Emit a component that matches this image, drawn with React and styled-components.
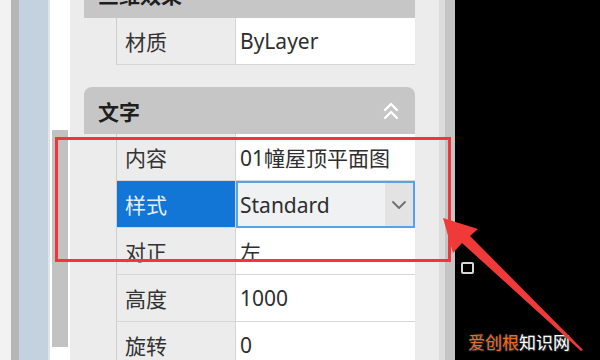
import styled, { createGlobalStyle } from 'styled-components';

const GlobalStyle = createGlobalStyle`
  html, body { margin: 0; padding: 0; background: #000; }
  body { font-family: "Noto Sans", "Noto Sans CJK SC", sans-serif; }
`;

const FONT = `"Noto Sans", "Noto Sans CJK SC", sans-serif`;

const Page = styled.div`
  position: relative;
  display: flex;
  width: 600px;
  height: 360px;
  overflow: hidden;
  background: #000;
`;

const Strip = styled.div`
  flex-shrink: 0;
  width: ${p => p.$w}px;
  background: ${p => p.$bg};
`;

const ScrollTrack = styled.div`
  flex-shrink: 0;
  width: 18px;
  background: #fff;
  border-left: 2px solid #dde5ee;
  padding: 130px 0 0 2px;
`;

const ScrollThumb = styled.div`
  width: 16px;
  height: 217px;
  background: #c2c2c2;
`;

const Panel = styled.div`
  flex-shrink: 0;
  width: 355px;
  padding-left: 14px;
  background: #ececec;
  border-right: 6px solid #dcdcdc;
  display: flex;
  flex-direction: column;
`;

const PanelEdge = styled.div`
  flex-shrink: 0;
  width: 10px;
  background: #c4c4c4;
`;

const SectionHeader = styled.div`
  flex-shrink: 0;
  width: 331px;
  height: ${p => p.$h || 47}px;
  margin-top: ${p => p.$offset || 0}px;
  box-sizing: border-box;
  padding: 0 16px 0 14px;
  background: #c6c6c6;
  border-radius: 8px 8px 0 0;
  display: flex;
  align-items: center;
  justify-content: space-between;
  font-family: ${FONT};
  font-size: 21px;
  font-weight: 700;
  color: #1e1e1e;
`;

const Gap = styled.div`
  flex-shrink: 0;
  height: ${p => p.$h}px;
`;

const Row = styled.div`
  flex-shrink: 0;
  margin-left: 32px;
  width: 299px;
  height: 47px;
  box-sizing: border-box;
  display: grid;
  grid-template-columns: 120px 179px;
  border-bottom: 1px solid #d6d6d6;
  font-family: ${FONT};
  font-size: 21px;
`;

const Label = styled.div`
  display: flex;
  align-items: center;
  padding-left: 8px;
  border-left: 1px solid #cdcdcd;
  border-right: 1px solid #d4d4d4;
  background: ${p => (p.$selected ? '#1176d6' : '#ececec')};
  color: ${p => (p.$selected ? '#e6efff' : '#333')};
`;

const Value = styled.div`
  display: flex;
  align-items: center;
  padding-left: 4px;
  background: #fff;
  color: #2e2e2e;
  white-space: nowrap;
  overflow: hidden;
`;

const Combo = styled.div`
  display: flex;
  align-items: stretch;
  box-sizing: border-box;
  border: 2px solid #5aa2e4;
  background: #eff1f3;
  color: #2e2e2e;
  margin-bottom: -1px;
`;

const ComboText = styled.div`
  flex: 1;
  display: flex;
  align-items: center;
  padding-left: 2px;
`;

const ComboButton = styled.div`
  width: 28px;
  display: flex;
  align-items: center;
  justify-content: center;
  background: #e3e3e3;
`;

const Canvas = styled.div`
  position: relative;
  flex: 1;
  background: #000;
`;

const Grip = styled.div`
  position: absolute;
  left: 6px;
  top: 262px;
  width: 13px;
  height: 12px;
  box-sizing: border-box;
  border: 2px solid #d6d6d6;
  border-radius: 2px;
`;

const Watermark = styled.div`
  position: absolute;
  left: 13px;
  top: 329px;
  font-family: "Noto Sans CJK SC", sans-serif;
  font-size: 17px;
  color: #fff;
  text-shadow: 0 0 2px #444, 1px 1px 1px #333;
  white-space: nowrap;
`;

const Accent = styled.span`
  color: #ef6a22;
`;

const Highlight = styled.div`
  position: absolute;
  left: 55px;
  top: 137px;
  width: 396px;
  height: 125px;
  box-sizing: border-box;
  border: 3px solid #f0363a;
  pointer-events: none;
`;

const ArrowSvg = styled.svg`
  position: absolute;
  left: 440px;
  top: 210px;
  width: 160px;
  height: 150px;
`;

function DoubleChevronUp() {
  return (
    <svg width="16" height="18" viewBox="0 0 16 18" fill="none" stroke="#fff" strokeWidth="2.4" strokeLinecap="round" strokeLinejoin="round">
      <path d="M2 8 L8 2 L14 8" />
      <path d="M2 16 L8 10 L14 16" />
    </svg>
  );
}

function ChevronDown() {
  return (
    <svg width="16" height="10" viewBox="0 0 16 10" fill="none" stroke="#6e6e6e" strokeWidth="1.8" strokeLinecap="round" strokeLinejoin="round">
      <path d="M2 2 L8 8 L14 2" />
    </svg>
  );
}

const textRows = [
  { label: '内容', value: '01幢屋顶平面图' },
  { label: '样式', value: 'Standard', combo: true },
  { label: '对正', value: '左' },
  { label: '高度', value: '1000' },
  { label: '旋转', value: '0' },
];

export default function App() {
  return (
    <>
      <GlobalStyle />
      <Page>
        <Strip $w={11} $bg="#f2f2f2" />
        <Strip $w={8} $bg="#b6b6b6" />
        <Strip $w={29} $bg="#c4d2e0" />
        <ScrollTrack>
          <ScrollThumb />
        </ScrollTrack>
        <Panel>
          <SectionHeader $h={49} $offset={-31}>三维效果</SectionHeader>
          <Row>
            <Label>材质</Label>
            <Value>ByLayer</Value>
          </Row>
          <Gap $h={22} />
          <SectionHeader>
            <span>文字</span>
            <DoubleChevronUp />
          </SectionHeader>
          {textRows.map(r => (
            <Row key={r.label}>
              <Label $selected={r.combo}>{r.label}</Label>
              {r.combo ? (
                <Combo>
                  <ComboText>{r.value}</ComboText>
                  <ComboButton>
                    <ChevronDown />
                  </ComboButton>
                </Combo>
              ) : (
                <Value>{r.value}</Value>
              )}
            </Row>
          ))}
        </Panel>
        <PanelEdge />
        <Canvas>
          <Grip />
          <Watermark>
            <Accent>爱创根</Accent>知识网
          </Watermark>
        </Canvas>
        <Highlight />
        <ArrowSvg viewBox="0 0 160 150">
          <polygon
            points="3,8 38,19 30,26 143,140 141,141 22,33 13,43"
            fill="#f03a3a"
          />
        </ArrowSvg>
      </Page>
    </>
  );
}
